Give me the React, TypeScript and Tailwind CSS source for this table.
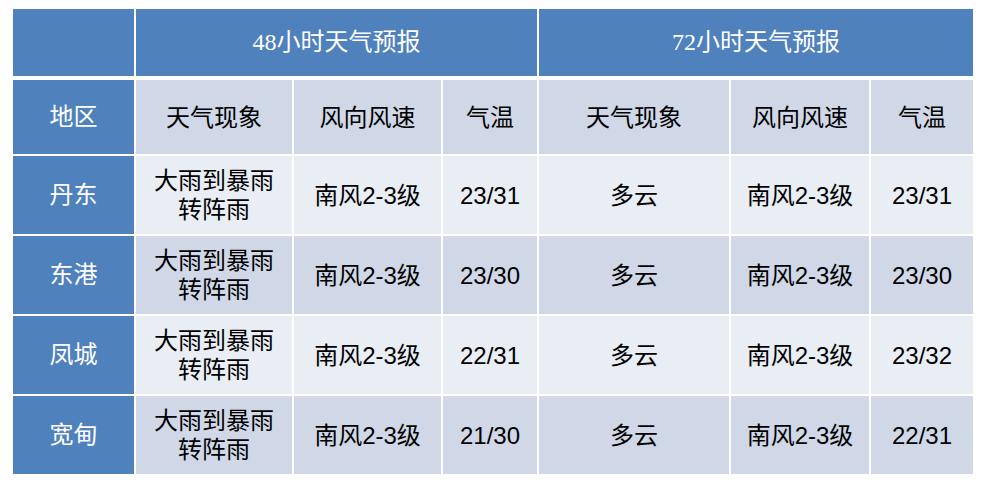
const rows = [
  { area: "丹东", w48: ["大雨到暴雨", "转阵雨"], wind48: "南风2-3级", t48: "23/31", w72: "多云", wind72: "南风2-3级", t72: "23/31" },
  { area: "东港", w48: ["大雨到暴雨", "转阵雨"], wind48: "南风2-3级", t48: "23/30", w72: "多云", wind72: "南风2-3级", t72: "23/30" },
  { area: "凤城", w48: ["大雨到暴雨", "转阵雨"], wind48: "南风2-3级", t48: "22/31", w72: "多云", wind72: "南风2-3级", t72: "23/32" },
  { area: "宽甸", w48: ["大雨到暴雨", "转阵雨"], wind48: "南风2-3级", t48: "21/30", w72: "多云", wind72: "南风2-3级", t72: "22/31" },
];

const sans = "font-['Liberation_Sans','Noto_Sans_CJK_SC',sans-serif]";
const serif = "font-['Liberation_Serif','Noto_Sans_CJK_SC',serif]";

const cell = "flex items-center justify-center text-center text-[24px] leading-[29px]";

export default function App() {
  return (
    <div className="w-[990px] h-[496px] bg-white pl-[13px] pt-[9px]">
      <div className="grid w-[960px] grid-cols-[121px_156px_147px_94px_190px_138px_102px] grid-rows-[69px_74px_repeat(4,78px)] gap-[2px]">
        {/* top header */}
        <div className="bg-[#4f81bd] mb-[2px]" />
        <div className={`${cell} ${serif} col-span-3 bg-[#4f81bd] mb-[2px] text-white`}>48小时天气预报</div>
        <div className={`${cell} ${serif} col-span-3 bg-[#4f81bd] mb-[2px] text-white`}>72小时天气预报</div>

        {/* column header */}
        <div className={`${cell} ${serif} bg-[#4f81bd] text-white`}>地区</div>
        {["天气现象", "风向风速", "气温", "天气现象", "风向风速", "气温"].map((h, i) => (
          <div key={i} className={`${cell} ${sans} bg-[#d0d8e8] text-black`}>
            {h}
          </div>
        ))}

        {rows.map((r, i) => {
          const bg = i % 2 === 0 ? "bg-[#e9edf4]" : "bg-[#d0d8e8]";
          return [
            <div key={`a${i}`} className={`${cell} ${serif} bg-[#4f81bd] text-white`}>{r.area}</div>,
            <div key={`b${i}`} className={`${cell} ${sans} ${bg} flex-col text-black`}>
              <span>{r.w48[0]}</span>
              <span>{r.w48[1]}</span>
            </div>,
            <div key={`c${i}`} className={`${cell} ${sans} ${bg} text-black`}>{r.wind48}</div>,
            <div key={`d${i}`} className={`${cell} ${sans} ${bg} text-black`}>{r.t48}</div>,
            <div key={`e${i}`} className={`${cell} ${sans} ${bg} text-black`}>{r.w72}</div>,
            <div key={`f${i}`} className={`${cell} ${sans} ${bg} text-black`}>{r.wind72}</div>,
            <div key={`g${i}`} className={`${cell} ${sans} ${bg} text-black`}>{r.t72}</div>,
          ];
        })}
      </div>
    </div>
  );
}
